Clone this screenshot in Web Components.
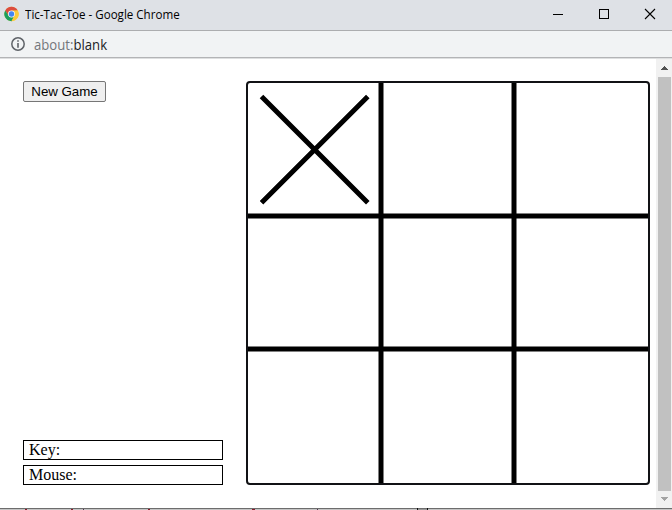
<!DOCTYPE html>
<html lang="en"><head><meta charset="utf-8"><title>Tic-Tac-Toe</title>
<style>html,body{margin:0;height:100%;overflow:hidden;background:#fff}</style></head>
<body><app-window>
<title-bar slot="top">Tic-Tac-Toe - Google Chrome</title-bar>
<address-bar slot="top"><span>about:</span>blank</address-bar>
<game-page></game-page><scroll-bar></scroll-bar><window-edge slot="bottom"></window-edge>
</app-window>
<script>
const define=(name,html)=>customElements.define(name,class extends HTMLElement{
  constructor(){super();this.attachShadow({mode:'open'}).innerHTML=html}
});
define('app-window',`<style>:host{display:flex;flex-direction:column;width:672px;height:510px;background:#fff}
main{display:flex;flex:1;min-height:0}</style><slot name="top"></slot><main><slot></slot></main><slot name="bottom"></slot>`);
define('title-bar',`<style>:host{display:flex;box-sizing:border-box;height:31px;background:#dee1e6;border-bottom:1px solid #acadaf;padding-left:4px;font:12px "Open Sans","Noto Sans",sans-serif;color:#000}
.logo{margin:6px 6px 0 0;width:15px;height:16px;flex:none}.t{line-height:30px;flex:1;white-space:nowrap}
.t span{display:inline-block;transform-origin:0 50%;transform:scaleX(.965)}
.c{width:138px;height:30px;flex:none;display:block}</style>
<svg class="logo" viewBox="0 0 48 48"><circle cx="24" cy="24" r="23" fill="#fbcb3b"/><path d="M4 12.5A23 23 0 0 1 44 12.5L24 13.5A10.5 10.5 0 0 0 14.9 29.25Z" fill="#dc4c3e"/><path d="M4 12.5A23 23 0 0 0 24 47L33.1 29.25A10.5 10.5 0 0 1 14.9 29.25Z" fill="#1a9f5e"/><path d="M44 12.5A23 23 0 0 1 24 47L33.1 29.25A10.5 10.5 0 0 0 24 13.5Z" fill="#fbcb3b"/><circle cx="24" cy="24" r="11" fill="#f2f2f2"/><circle cx="24" cy="24" r="8.5" fill="#4285f4"/></svg>
<div class="t"><span><slot></slot></span></div>
<svg class="c" viewBox="0 0 138 30" fill="none" stroke="#000"><path d="M19 14.5h10M65.5 9.5h9v9h-9z" shape-rendering="crispEdges"/><path d="M111 9l10 10M121 9l-10 10" stroke-width="1.1"/></svg>`);
define('address-bar',`<style>:host{display:flex;box-sizing:border-box;height:28px;background:linear-gradient(#f1f3f4 26px,#b3b4b6 26px,#b3b4b6 27px,#dedfe0 27px);padding-left:11px;font:14px/27px "Open Sans","Noto Sans",sans-serif;color:#202124;white-space:nowrap}
::slotted(span){color:#74777b}svg{width:14px;height:14px;margin:6px 9px 0 0;flex:none}.u{transform-origin:0 50%;transform:scaleX(.938)}</style>
<svg viewBox="0 0 14 14"><circle cx="7" cy="7" r="6.2" fill="none" stroke="#5f6368" stroke-width="1.5"/><path d="M6.2 3.2h1.6v1.6H6.2zM6.2 6h1.6v4.8H6.2z" fill="#5f6368"/></svg><div class="u"><slot></slot></div>`);
define('game-button',`<style>:host{display:block}button{display:block;box-sizing:border-box;width:83px;height:21px;margin:0;padding:0;background:#efefef;border:1px solid #767676;border-radius:2px;font:13.333px "Liberation Sans",Arial,sans-serif;letter-spacing:-.05px;color:#000;white-space:nowrap}</style><button><slot></slot></button>`);
define('status-field',`<style>:host{display:block;box-sizing:border-box;width:200px;height:20px;border:1px solid #000;padding-left:5px;font:16px/18px "Liberation Serif","Times New Roman",serif;color:#000}</style><slot></slot>`);
define('game-board',`<style>:host{display:block;box-sizing:border-box;width:404px;height:404px;border:2px solid #111215;border-radius:4px;overflow:hidden}svg{display:block}</style>
<svg width="400" height="400" fill="none" stroke="#000" stroke-width="5"><path d="M133 0V400M266 0V400M0 133H400M0 266H400M13.5 13.5L119.8 119.8M119.8 13.5L13.5 119.8"/></svg>`);
define('game-page',`<style>:host{display:flex;flex:1;box-sizing:border-box;padding:22px 6px 0 23px;gap:23px;align-items:flex-start}
aside{display:flex;flex-direction:column;width:200px;height:404px}.s{display:grid;gap:5px;margin-top:auto}</style>
<aside><game-button>New Game</game-button><div class="s"><status-field>Key:</status-field><status-field>Mouse:</status-field></div></aside><game-board></game-board>`);
define('scroll-bar',`<style>:host{display:flex;flex-direction:column;width:16px;background:#f1f1f1}i{flex:1;background:#c1c1c1;margin:0 1px 0 2px}svg{display:block;height:18px}svg+i+svg{height:17px}</style>
<svg width="16" height="18" shape-rendering="crispEdges"><path d="M5 11L8.5 7L12 11z" fill="#505050"/></svg><i></i><svg width="16" height="17" shape-rendering="crispEdges"><path d="M5 6L8.5 10L12 6z" fill="#a3a3a3"/></svg>`);
define('window-edge',`<style>:host{display:flex;height:2px;background:linear-gradient(#6d6d6d 1px,#c4c4c4 1px)}svg{display:block}</style>
<svg width="672" height="2" shape-rendering="crispEdges"><path d="M25 1h2v1h-2zM71 1h2v1h-2zM148 1h2v1h-2zM252 1h3v1h-3z" fill="#8b1c2b"/><path d="M83 1h1v1h-1zM317 1h1v1h-1z" fill="#53334e"/><path d="M418 1h9v1h-9z" fill="#999"/><path d="M417 0h1v2h-1zM427 0h1v2h-1z" fill="#111"/></svg>`);
</script></body></html>
